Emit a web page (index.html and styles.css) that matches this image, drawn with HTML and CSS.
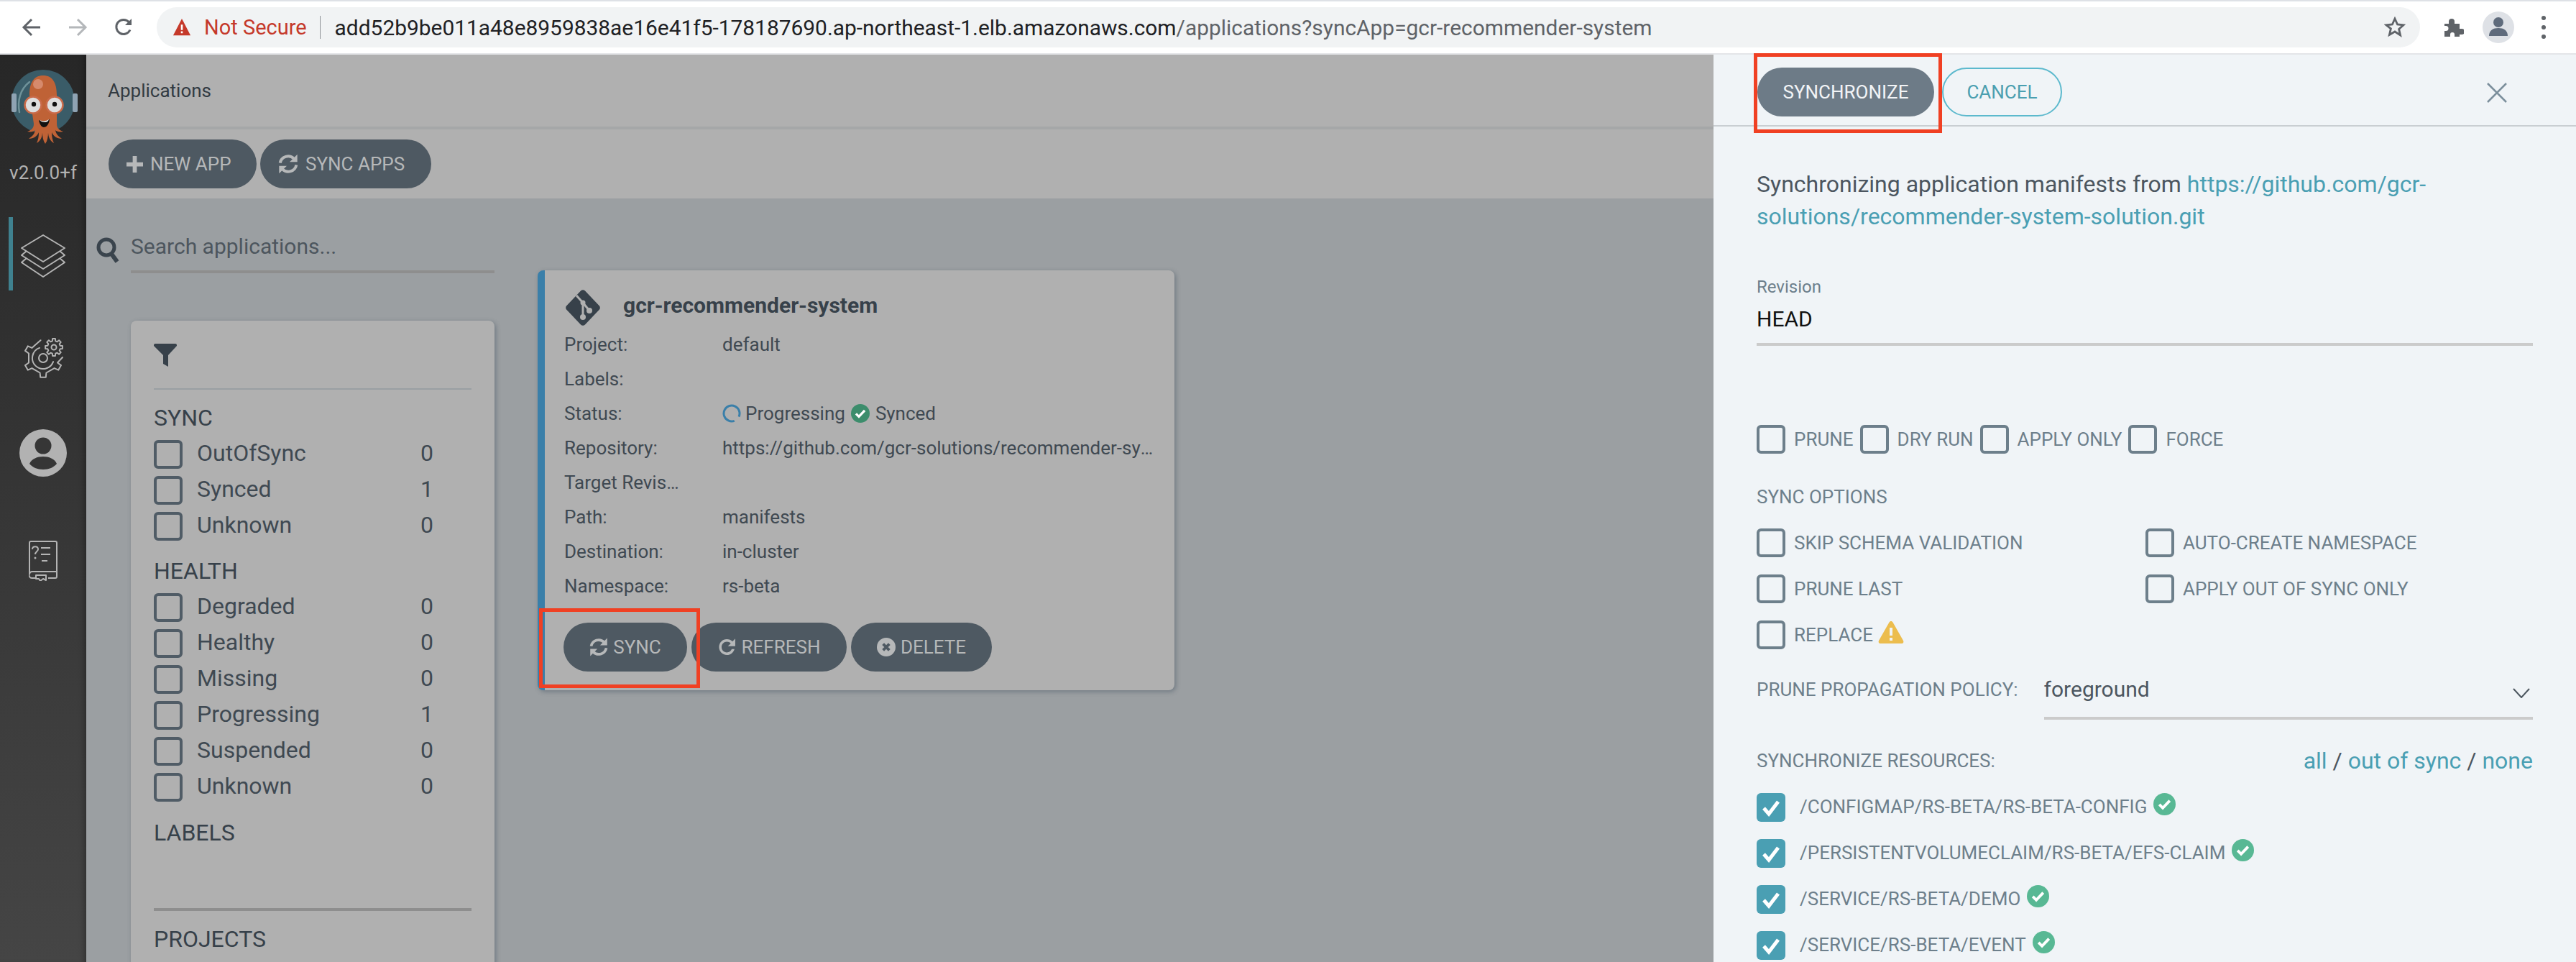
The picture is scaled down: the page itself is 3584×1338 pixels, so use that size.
FILE: index.html
```html
<!DOCTYPE html>
<html lang="en">
<head>
<meta charset="utf-8">
<title>Applications</title>
<link rel="stylesheet" href="styles.css">
</head>
<body>
<svg class="defs" width="0" height="0" aria-hidden="true">
  <symbol id="i-sync" viewBox="2 1.500 20 21">
    <path d="M3.500 11A8.600 8.600 0 0 1 18 6.500M20.500 13A8.600 8.600 0 0 1 6 17.500" fill="none" stroke="currentColor" stroke-width="3"/>
    <path d="M21.500 2v8h-8zM2.500 22v-8h8z" fill="currentColor"/>
  </symbol>
  <symbol id="i-redo" viewBox="3.500 2.500 18 19">
    <path d="M17.650 6.350C16.200 4.900 14.210 4 12 4c-4.420 0-7.990 3.580-7.990 8s3.570 8 7.990 8c3.730 0 6.840-2.550 7.730-6h-2.780c-.82 2.030-2.640 3.400-4.950 3.400-3.010 0-5.400-2.390-5.400-5.400s2.390-5.400 5.400-5.400c1.560 0 2.940.64 3.920 1.680L13 11h7.500V3.500l-2.850 2.850z" fill="currentColor"/>
  </symbol>
  <symbol id="i-check" viewBox="0 0 32 32">
    <circle cx="16" cy="16" r="16" fill="currentColor"/>
    <path d="M8.500 16.500l5 5 10-10.500" fill="none" stroke="#fff" stroke-width="4"/>
  </symbol>
  <symbol id="i-tick" viewBox="0 0 40 40">
    <path d="M10 21l7 8 13-17" fill="none" stroke="#fff" stroke-width="5"/>
  </symbol>
</svg>

<header class="chrome">
  <svg class="chrome-icon back" viewBox="0 0 28 28"><path d="M26 14H4M14 3L3 14l11 11" fill="none" stroke="#5f6368" stroke-width="3"/></svg>
  <svg class="chrome-icon forward" viewBox="0 0 28 28"><path d="M2 14h22M14 3l11 11-11 11" fill="none" stroke="#b4b7ba" stroke-width="3"/></svg>
  <svg class="chrome-icon reload" viewBox="0 0 28 28"><path d="M23 17.500A10 10 0 1 1 21.500 7" fill="none" stroke="#5f6368" stroke-width="3"/><path d="M25 2v9h-9z" fill="#5f6368"/></svg>
  <div class="omnibox">
    <svg class="warn-red" viewBox="0 0 28 28"><path d="M14 1L27 26H1z" fill="#c5392a"/><path d="M12.600 10h2.800v8h-2.800zM12.600 20h2.800v3h-2.800z" fill="#fff"/></svg>
    <span class="not-secure">Not Secure</span>
    <span class="omni-sep"></span>
    <span class="url">add52b9be011a48e8959838ae16e41f5-178187690.ap-northeast-1.elb.amazonaws.com<span class="url-path">/applications?syncApp=gcr-recommender-system</span></span>
    <svg class="star" viewBox="0 0 30 30"><path d="M15 3l3.600 8 8.400.8-6.400 5.600 2 8.600L15 21l-7.600 4.500 2-8.600L3 11.800l8.400-.8z" fill="none" stroke="#5f6368" stroke-width="2.800"/></svg>
  </div>
  <svg class="puzzle" viewBox="0 0 30 30"><path d="M3 10h6V7a4 4 0 0 1 8 0v3h7v7h3a4 4 0 0 1 0 8h-3v3h-7v-3a3 3 0 0 0-6 0v3H3v-8h2a3.500 3.500 0 0 0 0-7H3z" fill="#5f6368"/></svg>
  <div class="profile"><svg viewBox="0 0 44 44"><circle cx="22" cy="15" r="7" fill="#5f6b7c"/><path d="M9 34c0-8 6-11 13-11s13 3 13 11z" fill="#5f6b7c"/></svg></div>
  <div class="kebab"><i></i><i></i><i></i></div>
</header>

<div class="app">
  <nav class="sidebar">
    <svg class="logo" viewBox="0 0 120 126">
      <circle cx="60" cy="51" r="44" fill="#3a5c68"/>
      <rect x="16" y="40" width="7" height="26" rx="2" fill="#8fa3b3"/>
      <rect x="101" y="40" width="7" height="26" rx="2" fill="#8fa3b3"/>
      <path d="M27 66C24 50 28 34 41 24" fill="none" stroke="#6f9299" stroke-width="2.500" stroke-linecap="round"/>
      <path d="M41 42c0-17 6-27 19-27s19 10 19 27v40c0 7 4 9 9 11-5 1-9 0-11-2 1 6 5 9 9 12-7 0-12-4-14-9 0 6 1 11 3 15-6-3-8-10-8-15 0 6-1 12-4 16-3-4-4-10-4-16 0 5-2 12-8 15 2-4 3-9 3-15-2 5-7 9-14 9 4-3 8-6 9-12-2 2-6 3-11 2 5-2 9-4 9-11z" fill="#bf6236"/>
      <circle cx="53" cy="27" r="7" fill="#d68a6c"/>
      <circle cx="46" cy="56" r="11.500" fill="#dedede" stroke="#c96a49" stroke-width="2.500"/>
      <circle cx="76" cy="56" r="11.500" fill="#dedede" stroke="#c96a49" stroke-width="2.500"/>
      <circle cx="47" cy="55" r="3.200" fill="#111"/>
      <circle cx="76" cy="55" r="3.200" fill="#111"/>
      <path d="M54 77c4 2 10 2 15-1-1 8-5 11-8 11s-6-4-7-10z" fill="#111"/>
      <path d="M55 77c4 2 9 2 13-1-1 3-3 4-6 4s-5-1-7-3z" fill="#eee"/>
    </svg>
    <div class="version">v2.0.0+f</div>
    <div class="nav-item nav-item-active">
      <svg class="nav-layers" viewBox="0 0 62 60"><g fill="none" stroke="#b4b4b4" stroke-width="2" stroke-linejoin="round"><path d="M31 1l30 18-30 19L1 19z"/><path d="M8 23L1 29l30 19 30-19-7-6"/><path d="M8 33l-7 6 30 20 30-20-7-6"/></g></svg>
    </div>
    <div class="nav-item nav-item-gear">
      <svg class="nav-gear" viewBox="0 0 56 56"><g fill="none" stroke="#b4b4b4" stroke-width="2" stroke-linejoin="round" stroke-linecap="round">
        <path d="M24.500 3.200L15.900 10.800 12.400 13.900 6.700 11.400 3 17.900 8 21.500 8 34.500 3 38.100 6.700 44.600 12.400 42.100 23.600 48.500 24.200 54.700 31.800 54.700 32.400 48.500 43.600 42.100 49.300 44.600 53 38.100 48 34.500 55 27"/>
        <path d="M22.900 13.900A15 15 0 1 0 42.100 33.100"/>
        <circle cx="28" cy="28" r="6"/>
        <path d="M51.700 10.800L54.900 11.100 54.900 14.900 51.700 15.200 50.700 17.600 52.700 20.100 50.100 22.700 47.600 20.700 45.200 21.700 44.900 24.900 41.100 24.900 40.800 21.700 38.400 20.700 35.900 22.700 33.300 20.100 35.300 17.600 34.300 15.200 31.100 14.900 31.100 11.100 34.300 10.800 35.300 8.400 33.300 5.900 35.900 3.300 38.400 5.300 40.800 4.300 41.100 1.100 44.900 1.100 45.200 4.300 47.600 5.300 50.100 3.300 52.700 5.900 50.700 8.400z" fill="#323232"/>
        <circle cx="43" cy="13" r="3.500"/>
      </g></svg>
    </div>
    <div class="nav-item nav-item-user">
      <svg class="nav-user" viewBox="0 0 66 66"><circle cx="33" cy="33" r="33" fill="#b2b2b2"/><circle cx="33" cy="23" r="11.500" fill="#363636"/><path d="M14 48c3-7 11-10 19-10s16 3 19 10c-4 5-11 8-19 8s-15-3-19-8z" fill="#363636"/></svg>
    </div>
    <div class="nav-item nav-item-book">
      <svg class="nav-book" viewBox="0 0 40 56"><g fill="none" stroke="#b4b4b4" stroke-width="2" stroke-linejoin="round"><path d="M1 46V3a2 2 0 0 1 2-2h34a2 2 0 0 1 2 2v47a2 2 0 0 1-2 2H27M11 52H5a4 4 0 0 1-4-6 4 4 0 0 1 4-3h34"/><path d="M10 48h14v7l-4-2-4 3-2-3h-4z"/><path d="M17 10h13M17 19h13M18 28h8"/><path d="M5 12c0-5 8-5 8 0 0 3-4 3-4 7"/></g><circle cx="9" cy="24" r="1.500" fill="#b4b4b4"/></svg>
    </div>
  </nav>

  <main class="main">
    <div class="title-bar">Applications</div>
    <div class="tool-bar">
      <button class="btn btn-new"><svg class="btn-plus" viewBox="2 2 20 20"><path d="M9.500 2h5v7.500H22v5h-7.500V22h-5v-7.500H2v-5h7.500z" fill="currentColor"/></svg>NEW APP</button>
      <button class="btn btn-syncapps"><svg class="btn-icon-lg" viewBox="0 0 24 24"><use href="#i-sync"/></svg>SYNC APPS</button>
    </div>
    <div class="content">
      <div class="left-col">
        <div class="search">
          <svg class="search-icon" viewBox="0 0 32 36"><circle cx="14" cy="14" r="11" fill="none" stroke="#3a444d" stroke-width="5"/><path d="M21 23l8 11" stroke="#3a444d" stroke-width="6"/></svg>
          <div class="search-input">Search applications...</div>
        </div>
        <aside class="filters">
          <svg class="funnel" viewBox="0 0 32 32"><path d="M0 2a2 2 0 0 1 2-2h28a2 2 0 0 1 2 2v1L20 16v16l-7-4V16L0 3z" fill="#37414a"/></svg>
          <div class="filters-rule"></div>
          <h3 class="filter-title">SYNC</h3>
          <label class="filter-row"><span class="box"></span><span class="filter-name">OutOfSync</span><span class="filter-count">0</span></label>
          <label class="filter-row"><span class="box"></span><span class="filter-name">Synced</span><span class="filter-count">1</span></label>
          <label class="filter-row"><span class="box"></span><span class="filter-name">Unknown</span><span class="filter-count">0</span></label>
          <h3 class="filter-title filter-title-next">HEALTH</h3>
          <label class="filter-row"><span class="box"></span><span class="filter-name">Degraded</span><span class="filter-count">0</span></label>
          <label class="filter-row"><span class="box"></span><span class="filter-name">Healthy</span><span class="filter-count">0</span></label>
          <label class="filter-row"><span class="box"></span><span class="filter-name">Missing</span><span class="filter-count">0</span></label>
          <label class="filter-row"><span class="box"></span><span class="filter-name">Progressing</span><span class="filter-count">1</span></label>
          <label class="filter-row"><span class="box"></span><span class="filter-name">Suspended</span><span class="filter-count">0</span></label>
          <label class="filter-row"><span class="box"></span><span class="filter-name">Unknown</span><span class="filter-count">0</span></label>
          <h3 class="filter-title filter-title-labels">LABELS</h3>
          <div class="filters-rule-thick"></div>
          <h3 class="filter-title filter-title-projects">PROJECTS</h3>
        </aside>
      </div>
      <article class="card">
        <div class="card-head">
          <svg class="git-icon" viewBox="0 0 48 50"><path d="M21 1.500a4 4 0 0 1 6 0l19.500 20.500a4 4 0 0 1 0 6L27 48.500a4 4 0 0 1-6 0L1.500 28a4 4 0 0 1 0-6z" fill="#37414a"/><path d="M15 8l9 10v20M24 18l9 11" fill="none" stroke="#b0b0b0" stroke-width="3"/><circle cx="24" cy="18" r="3.500" fill="#b0b0b0"/><circle cx="24" cy="38" r="4" fill="#b0b0b0"/><circle cx="33" cy="29" r="4" fill="#b0b0b0"/></svg>
          <span class="card-title">gcr-recommender-system</span>
        </div>
        <div class="card-row"><span class="card-key">Project:</span><span class="card-val">default</span></div>
        <div class="card-row"><span class="card-key">Labels:</span><span class="card-val"></span></div>
        <div class="card-row"><span class="card-key">Status:</span><span class="card-val card-status">
          <svg class="status-icon" viewBox="0 0 26 26"><circle cx="13" cy="13" r="11" fill="none" stroke="#3a7fa9" stroke-width="3" stroke-dasharray="60 9" transform="rotate(70 13 13)"/></svg>Progressing
          <svg class="status-icon status-green" viewBox="0 0 32 32"><use href="#i-check"/></svg>Synced</span></div>
        <div class="card-row"><span class="card-key">Repository:</span><span class="card-val">https://github.com/gcr-solutions/recommender-system-solution.git</span></div>
        <div class="card-row"><span class="card-key">Target Revision:</span><span class="card-val"></span></div>
        <div class="card-row"><span class="card-key">Path:</span><span class="card-val">manifests</span></div>
        <div class="card-row"><span class="card-key">Destination:</span><span class="card-val">in-cluster</span></div>
        <div class="card-row"><span class="card-key">Namespace:</span><span class="card-val">rs-beta</span></div>
        <div class="card-actions">
          <button class="btn btn-sync"><svg class="btn-icon" viewBox="0 0 24 24"><use href="#i-sync"/></svg>SYNC</button>
          <button class="btn btn-refresh"><svg class="btn-icon" viewBox="0 0 24 24"><use href="#i-redo"/></svg>REFRESH</button>
          <button class="btn btn-delete"><svg class="btn-icon" viewBox="0 0 24 24"><circle cx="12" cy="12" r="12" fill="currentColor"/><path d="M8 8l8 8M16 8l-8 8" stroke="#4e5962" stroke-width="3.600"/></svg>DELETE</button>
        </div>
      </article>
    </div>
  </main>

  <section class="panel">
    <div class="panel-head">
      <button class="btn-primary">SYNCHRONIZE</button>
      <button class="btn-outline">CANCEL</button>
      <svg class="close" viewBox="0 0 28 28"><path d="M1 1l26 26M27 1L1 27" stroke="#7c8f9c" stroke-width="2.500"/></svg>
    </div>
    <div class="panel-body">
      <p class="intro">Synchronizing application manifests from <a class="link">https://github.com/gcr-solutions/recommender-system-solution.git</a></p>
      <div class="field-label">Revision</div>
      <div class="field-value">HEAD</div>
      <div class="opt-inline">
        <span class="box box-panel"></span><span class="opt-text">PRUNE</span>
        <span class="box box-panel"></span><span class="opt-text">DRY RUN</span>
        <span class="box box-panel"></span><span class="opt-text">APPLY ONLY</span>
        <span class="box box-panel"></span><span class="opt-text">FORCE</span>
      </div>
      <div class="section-label">SYNC OPTIONS</div>
      <div class="opt-grid">
        <div class="opt"><span class="box box-panel"></span><span class="opt-text">SKIP SCHEMA VALIDATION</span></div>
        <div class="opt"><span class="box box-panel"></span><span class="opt-text">AUTO-CREATE NAMESPACE</span></div>
        <div class="opt"><span class="box box-panel"></span><span class="opt-text">PRUNE LAST</span></div>
        <div class="opt"><span class="box box-panel"></span><span class="opt-text">APPLY OUT OF SYNC ONLY</span></div>
        <div class="opt"><span class="box box-panel"></span><span class="opt-text">REPLACE</span>
          <svg class="warn-yellow" viewBox="0 0 36 32"><path d="M18 1c1 0 2 .6 2.500 1.600L35 28c1 2 0 4-2 4H3c-2 0-3-2-2-4L15.500 2.600C16 1.600 17 1 18 1z" fill="#ecbd4e"/><path d="M16 10h4v11h-4zM16 24h4v4h-4z" fill="#f0f4f7"/></svg></div>
      </div>
      <div class="policy">
        <span class="section-label section-label-inline">PRUNE PROPAGATION POLICY:</span>
        <div class="select">foreground<svg class="chevron" viewBox="0 0 24 14"><path d="M1 1l11 12L23 1" fill="none" stroke="#4b555e" stroke-width="2"/></svg></div>
      </div>
      <div class="res-head">
        <span class="section-label section-label-inline">SYNCHRONIZE RESOURCES:</span>
        <span class="res-select"><a class="link">all</a> / <a class="link">out of sync</a> / <a class="link">none</a></span>
      </div>
      <div class="res"><span class="box box-checked"><svg viewBox="0 0 40 40"><use href="#i-tick"/></svg></span><span class="opt-text">/CONFIGMAP/RS-BETA/RS-BETA-CONFIG</span><svg class="res-ok" viewBox="0 0 32 32"><use href="#i-check"/></svg></div>
      <div class="res"><span class="box box-checked"><svg viewBox="0 0 40 40"><use href="#i-tick"/></svg></span><span class="opt-text">/PERSISTENTVOLUMECLAIM/RS-BETA/EFS-CLAIM</span><svg class="res-ok" viewBox="0 0 32 32"><use href="#i-check"/></svg></div>
      <div class="res"><span class="box box-checked"><svg viewBox="0 0 40 40"><use href="#i-tick"/></svg></span><span class="opt-text">/SERVICE/RS-BETA/DEMO</span><svg class="res-ok" viewBox="0 0 32 32"><use href="#i-check"/></svg></div>
      <div class="res"><span class="box box-checked"><svg viewBox="0 0 40 40"><use href="#i-tick"/></svg></span><span class="opt-text">/SERVICE/RS-BETA/EVENT</span><svg class="res-ok" viewBox="0 0 32 32"><use href="#i-check"/></svg></div>
    </div>
  </section>

  <div class="mark mark-card"></div>
  <div class="mark mark-panel"></div>
</div>
</body>
</html>
```

FILE: styles.css
```css
* { box-sizing: border-box; }
html, body { margin: 0; height: 100%; }
body {
  width: 3584px;
  height: 1338px;
  overflow: hidden;
  background: #9b9fa2;
  font-family: Roboto, "Liberation Sans", sans-serif;
  color: #3a444d;
}
.defs { position: absolute; }
button { font-family: inherit; border: 0; padding: 0; }

/* browser chrome */
.chrome {
  height: 76px;
  background: #fff;
  border-top: 2px solid #dee1e6;
  border-bottom: 2px solid #e3e5e8;
  display: flex;
  align-items: center;
}
.chrome-icon { width: 28px; height: 28px; flex: none; }
.back { margin-left: 30px; }
.forward { margin-left: 36px; }
.reload { margin-left: 36px; }
.omnibox {
  margin-left: 32px;
  width: 3149px;
  height: 56px;
  border-radius: 28px;
  background: #f1f3f4;
  display: flex;
  align-items: center;
  padding-left: 22px;
  font-size: 29px;
}
.warn-red { width: 26px; height: 26px; flex: none; }
.not-secure { color: #c5392a; margin-left: 18px; }
.omni-sep { width: 1px; height: 32px; background: #8f9296; margin: 0 20px 0 18px; }
.url { color: #202124; font-size: 29.900px; white-space: nowrap; }
.url-path { color: #5f6368; }
.star { width: 30px; height: 30px; margin-left: auto; margin-right: 20px; }
.puzzle { width: 30px; height: 30px; margin-left: 31px; flex: none; }
.profile {
  width: 44px; height: 44px; border-radius: 50%;
  background: #dee1e6; margin-left: 26px; flex: none;
}
.profile svg { display: block; }
.kebab { margin-left: 38px; display: flex; flex-direction: column; gap: 7px; }
.kebab i { width: 6px; height: 6px; border-radius: 50%; background: #5f6368; display: block; }

/* app frame */
.app { position: relative; display: flex; height: 1262px; }
.sidebar {
  width: 120px; flex: none;
  background: linear-gradient(#272727, #454545);
  box-shadow: inset -8px 0 8px -6px rgba(0,0,0,.35);
  display: flex; flex-direction: column; align-items: center;
  padding-top: 14px;
}
.logo { width: 120px; height: 126px; display: block; flex: none; }
.version { font-size: 26px; line-height: 32px; color: #b2b2b2; margin-top: 8px; white-space: nowrap; }
.nav-item { width: 120px; height: 102px; display: flex; align-items: center; justify-content: center; flex: none; }
.nav-item-active { margin-top: 46px; padding-top: 6px; position: relative; }
.nav-item-active::before {
  content: ""; position: absolute; left: 12px; top: 0; bottom: 0; width: 6px; background: #3f818f;
}
.nav-item-gear { margin-top: 43px; }
.nav-item-user { margin-top: 30px; }
.nav-item-book { margin-top: 48px; }
.nav-layers { width: 62px; height: 60px; }
.nav-gear { width: 56px; height: 56px; }
.nav-user { width: 66px; height: 66px; }
.nav-book { width: 40px; height: 56px; }

/* main column */
.main { flex: 1; min-width: 0; display: flex; flex-direction: column; overflow: hidden; }
.title-bar {
  height: 104px; flex: none;
  background: #b0b0b0;
  border-bottom: 4px solid #a5a7a8;
  padding-left: 30px;
  display: flex; align-items: center;
  font-size: 26px;
  color: #333b42;
}
.tool-bar {
  height: 96px; flex: none;
  background: #b0b0b0;
  padding: 14px 0 0 31px;
  display: flex; gap: 5px;
}
.btn {
  height: 68px;
  border-radius: 34px;
  background: #4e5962;
  color: #b6b8b9;
  font-size: 26px;
  font-weight: 400;
  display: inline-flex;
  align-items: center;
  justify-content: center;
  gap: 7px;
  white-space: nowrap;
}
.btn-new, .btn-syncapps { justify-content: flex-start; padding-left: 25px; gap: 10px; }
.btn-new { width: 206px; }
.btn-syncapps { width: 238px; }
.btn-plus { width: 23px; height: 23px; flex: none; }
.btn-icon-lg { width: 28px; height: 34px; flex: none; }
.btn-icon { width: 26px; height: 28px; flex: none; }
.content { display: flex; align-items: flex-start; padding-left: 14px; }
.left-col { width: 554px; flex: none; }
.search { display: flex; align-items: center; height: 64px; margin-top: 40px; }
.search-icon { width: 32px; height: 36px; flex: none; margin-right: 16px; }
.search-input {
  flex: 1; height: 64px; line-height: 54px;
  border-bottom: 4px solid #8e8e8e;
  font-size: 30px; color: #4d565e;
}
.filters {
  margin: 66px 0 0 48px;
  height: 900px;
  background: #b0b0b0;
  border-radius: 8px;
  padding: 32px;
  box-shadow: 2px 2px 6px rgba(60,75,90,.45);
}
.funnel { width: 32px; height: 32px; display: block; }
.filters-rule { height: 2px; background: #9a9fa3; margin: 30px 0 19px; }
.filter-title { margin: 0 0 11px; font-size: 32px; line-height: 40px; font-weight: 400; color: #37414a; }
.filter-title-next { margin-top: 22px; }
.filter-title-labels { margin-top: 23px; }
.filters-rule-thick { height: 4px; background: #8e8e8e; margin-top: 85px; }
.filter-title-projects { margin-top: 19px; }
.filter-row { display: flex; align-items: center; height: 40px; margin-bottom: 10px; font-size: 32px; color: #3f4952; }
.box {
  width: 40px; height: 40px; flex: none;
  border: 4px solid #505c66;
  border-radius: 6px;
  display: block;
}
.filter-name { margin: 0 0 4px 20px; width: 311px; }
.filter-count { width: 30px; margin-bottom: 4px; }

/* application card */
.card {
  margin: 100px 0 0 60px;
  width: 886px;
  background: #b0b0b0;
  border-left: 10px solid #3a7fa9;
  border-radius: 8px;
  padding: 24px 22px 26px 27px;
  box-shadow: 2px 2px 6px rgba(60,75,90,.45);
  font-size: 26px;
}
.card-head { display: flex; align-items: center; height: 55px; }
.git-icon { width: 48px; height: 50px; flex: none; margin: 0 32px 0 2px; }
.card-title { font-size: 30px; font-weight: 700; color: #37414a; margin-bottom: 6px; }
.card-row { display: flex; height: 48px; line-height: 48px; color: #3f4952; }
.card-key { width: 220px; padding-right: 60px; flex: none; white-space: nowrap; overflow: hidden; text-overflow: ellipsis; }
.card-val { flex: 1; min-width: 0; white-space: nowrap; overflow: hidden; text-overflow: ellipsis; }
.card-status { display: flex; align-items: center; }
.status-icon { width: 26px; height: 26px; flex: none; margin-right: 6px; }
.status-green { color: #3c8d6c; margin-left: 8px; margin-right: 8px; }
.card-actions { display: flex; gap: 6px; margin: 27px 0 0 -1px; }
.btn-sync { width: 172px; }
.btn-refresh { width: 216px; }
.btn-delete { width: 196px; }

/* sliding panel */
.panel {
  width: 1200px; flex: none;
  background: #f0f4f7;
  overflow: hidden;
  font-size: 26px;
  color: #6d7f8b;
}
.panel-head {
  height: 100px;
  border-bottom: 2px solid #c9ced2;
  padding: 18px 96px 0 60px;
  display: flex;
  align-items: flex-start;
}
.btn-primary, .btn-outline {
  height: 68px; border-radius: 34px; font-size: 26px; font-weight: 400;
}
.btn-primary { width: 246px; margin-left: 1px; background: #6d7b87; color: #f2f4f6; }
.btn-outline { width: 167px; margin-left: 11px; background: transparent; border: 2px solid #5cb9cd; color: #4b9fb0; }
.close { width: 28px; height: 28px; margin: 21px 0 0 auto; }
.panel-body { padding: 0 60px; }
.intro { margin: 58px 0 0; font-size: 32px; line-height: 45px; color: #4c5660; font-weight: 400; }
.link { color: #4a9fb3; text-decoration: none; }
.field-label { margin-top: 60px; font-size: 24px; line-height: 30px; }
.field-value {
  margin-top: 12px;
  font-size: 30px; line-height: 36px; color: #111;
  height: 55px;
  border-bottom: 4px solid #cbcbcb;
}
.opt-inline { display: flex; align-items: center; margin-top: 110px; height: 40px; }
.box-panel { border-color: #6d7f8b; }
.opt-text { margin-left: 12px; margin-right: 9px; white-space: nowrap; }
.section-label { margin-top: 40px; line-height: 40px; height: 40px; }
.section-label-inline { margin: 0; height: auto; }
.opt-grid {
  margin-top: 24px;
  display: grid;
  grid-template-columns: 541px 1fr;
  grid-auto-rows: 64px;
}
.opt { display: flex; align-items: flex-start; }
.opt .opt-text { line-height: 40px; }
.warn-yellow { width: 36px; height: 32px; margin-left: -2px; flex: none; }
.policy { display: flex; align-items: flex-start; margin-top: 12px; }
.policy .section-label { line-height: 40px; }
.select {
  position: relative;
  margin-left: 36px;
  flex: 1;
  height: 62px;
  border-bottom: 4px solid #cbcbcb;
  font-size: 30px;
  line-height: 40px;
  color: #4c5660;
}
.chevron { position: absolute; right: 4px; top: 18px; width: 24px; height: 14px; }
.res-head { display: flex; justify-content: space-between; align-items: center; margin-top: 35px; height: 44px; }
.res-select { font-size: 32px; color: #4c5660; }
.res { display: flex; align-items: flex-start; height: 64px; }
.res-head + .res { margin-top: 23px; }
.box-checked { border: 0; background: #4a9fb3; }
.box-checked svg { display: block; width: 40px; height: 40px; }
.res .opt-text { margin-left: 20px; margin-right: 8px; line-height: 38px; }
.res-ok { width: 31px; height: 31px; color: #58b894; flex: none; margin-left: 1px; }

/* red annotation rectangles */
.mark { position: absolute; border: 5px solid #f04023; pointer-events: none; }
.mark-card { left: 750px; top: 770px; width: 224px; height: 111px; }
.mark-panel { left: 2440px; top: -2px; width: 262px; height: 111px; }
```
